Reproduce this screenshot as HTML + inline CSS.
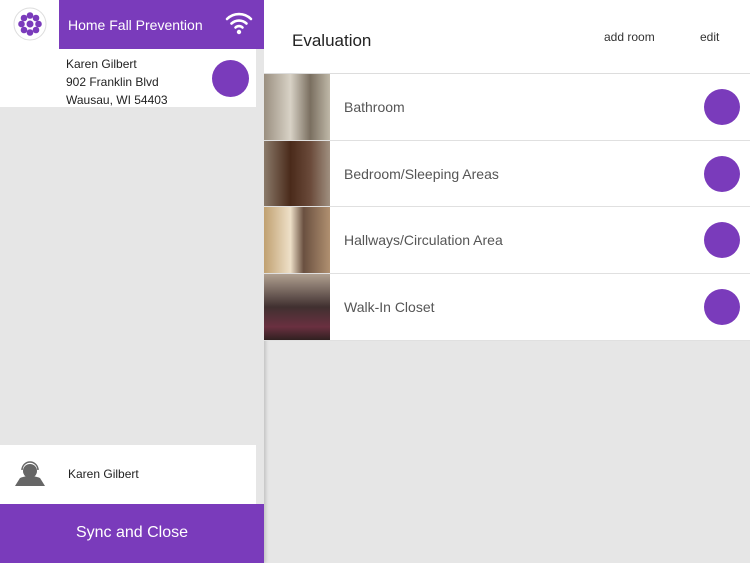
<!DOCTYPE html><html><head><style>
body{margin:0;width:750px;height:563px;position:relative;overflow:hidden;background:#e6e6e6;font-family:"Liberation Sans",sans-serif;}
.a{position:absolute}
.row{position:absolute;left:264px;width:486px;box-sizing:border-box;background:#fff;border-bottom:1px solid #e0e0e0}
.row .t{position:absolute;left:80px;top:25px;font-size:14px;color:#555}
.row .d{position:absolute;left:440px;top:15px;width:36px;height:36px;border-radius:50%;background:#7a3bbb}
.row .p{position:absolute;left:0;top:0;width:66px;bottom:0}
</style></head><body>
<div class="a" style="left:0;top:0;width:264px;height:563px;background:#e6e6e6;box-shadow:2px 0 3px rgba(0,0,0,.15)"></div>
<div class="a" style="left:0;top:0;width:59px;height:49px;background:#fff"></div>
<svg class="a" style="left:13px;top:7px" width="34" height="34" viewBox="0 0 34 34"><circle cx="17" cy="17" r="16" fill="#fff" stroke="#ddd"/><g fill="#7a3bbb"><circle cx="17" cy="17" r="3.5"/><circle cx="17" cy="8.5" r="3.3"/><circle cx="17" cy="25.5" r="3.3"/><circle cx="8.5" cy="17" r="3.3"/><circle cx="25.5" cy="17" r="3.3"/><circle cx="11" cy="11" r="3.3"/><circle cx="23" cy="11" r="3.3"/><circle cx="11" cy="23" r="3.3"/><circle cx="23" cy="23" r="3.3"/></g></svg>
<div class="a" style="left:59px;top:0;width:205px;height:49px;background:#7a3bbb"></div>
<div class="a" style="left:68px;top:17px;color:#fff;font-size:14px">Home Fall Prevention</div>
<svg class="a" style="left:224px;top:10px" width="30" height="26" viewBox="0 0 30 26"><g fill="none" stroke="#fff" stroke-width="2.6" stroke-linecap="round"><path d="M3 9 A17 17 0 0 1 27 9"/><path d="M7.5 13.5 A11 11 0 0 1 22.5 13.5"/><path d="M11.5 17.5 A5 5 0 0 1 18.5 17.5"/></g><circle cx="15" cy="22" r="2.2" fill="#fff"/></svg>
<div class="a" style="left:0;top:49px;width:256px;height:58px;background:#fff"></div>
<div class="a" style="left:66px;top:55px;font-size:12px;color:#222;line-height:18px">Karen Gilbert<br>902 Franklin Blvd<br>Wausau, WI 54403</div>
<div class="a" style="left:212px;top:60px;width:37px;height:37px;border-radius:50%;background:#7a3bbb"></div>
<div class="a" style="left:0;top:445px;width:256px;height:59px;background:#fff"></div>
<svg class="a" style="left:15px;top:461px" width="30" height="26" viewBox="0 0 30 26"><path d="M0 25 L5 17 Q15 13 25 17 L30 25Z" fill="#666"/><circle cx="15" cy="10" r="7" fill="#666"/><path d="M7 9 A8 8 0 0 1 23 9" fill="none" stroke="#666" stroke-width="1.5"/></svg>
<div class="a" style="left:68px;top:467px;font-size:12px;color:#222">Karen Gilbert</div>
<div class="a" style="left:0;top:504px;width:264px;height:59px;background:#7a3bbb"></div>
<div class="a" style="left:0;top:524px;width:264px;text-align:center;color:#fff;font-size:16px">Sync and Close</div>
<div class="a" style="left:264px;top:0;width:486px;height:73px;background:#fff;border-bottom:1px solid #ddd"></div>
<div class="a" style="left:292px;top:31px;font-size:17px;color:#222">Evaluation</div>
<div class="a" style="left:604px;top:30px;font-size:12px;color:#333">add room</div>
<div class="a" style="left:700px;top:30px;font-size:12px;color:#333">edit</div>
<div class="row" style="top:74px;height:67px"><div class="p" style="background:linear-gradient(90deg,#9a8f80,#d8d2c6 40%,#7a6f60 70%,#bfb8a8)"></div><div class="t">Bathroom</div><div class="d"></div></div>
<div class="row" style="top:141px;height:66px"><div class="p" style="background:linear-gradient(90deg,#8a7a6a,#4a2a1a 40%,#6a4a3a 70%,#a09080)"></div><div class="t">Bedroom/Sleeping Areas</div><div class="d"></div></div>
<div class="row" style="top:207px;height:67px"><div class="p" style="background:linear-gradient(90deg,#c0a070,#eee0c8 40%,#6a5040 60%,#b09070)"></div><div class="t">Hallways/Circulation Area</div><div class="d"></div></div>
<div class="row" style="top:274px;height:67px"><div class="p" style="background:linear-gradient(180deg,#b0a090,#403030 50%,#6a3040 80%,#302020)"></div><div class="t">Walk-In Closet</div><div class="d"></div></div>
</body></html>
